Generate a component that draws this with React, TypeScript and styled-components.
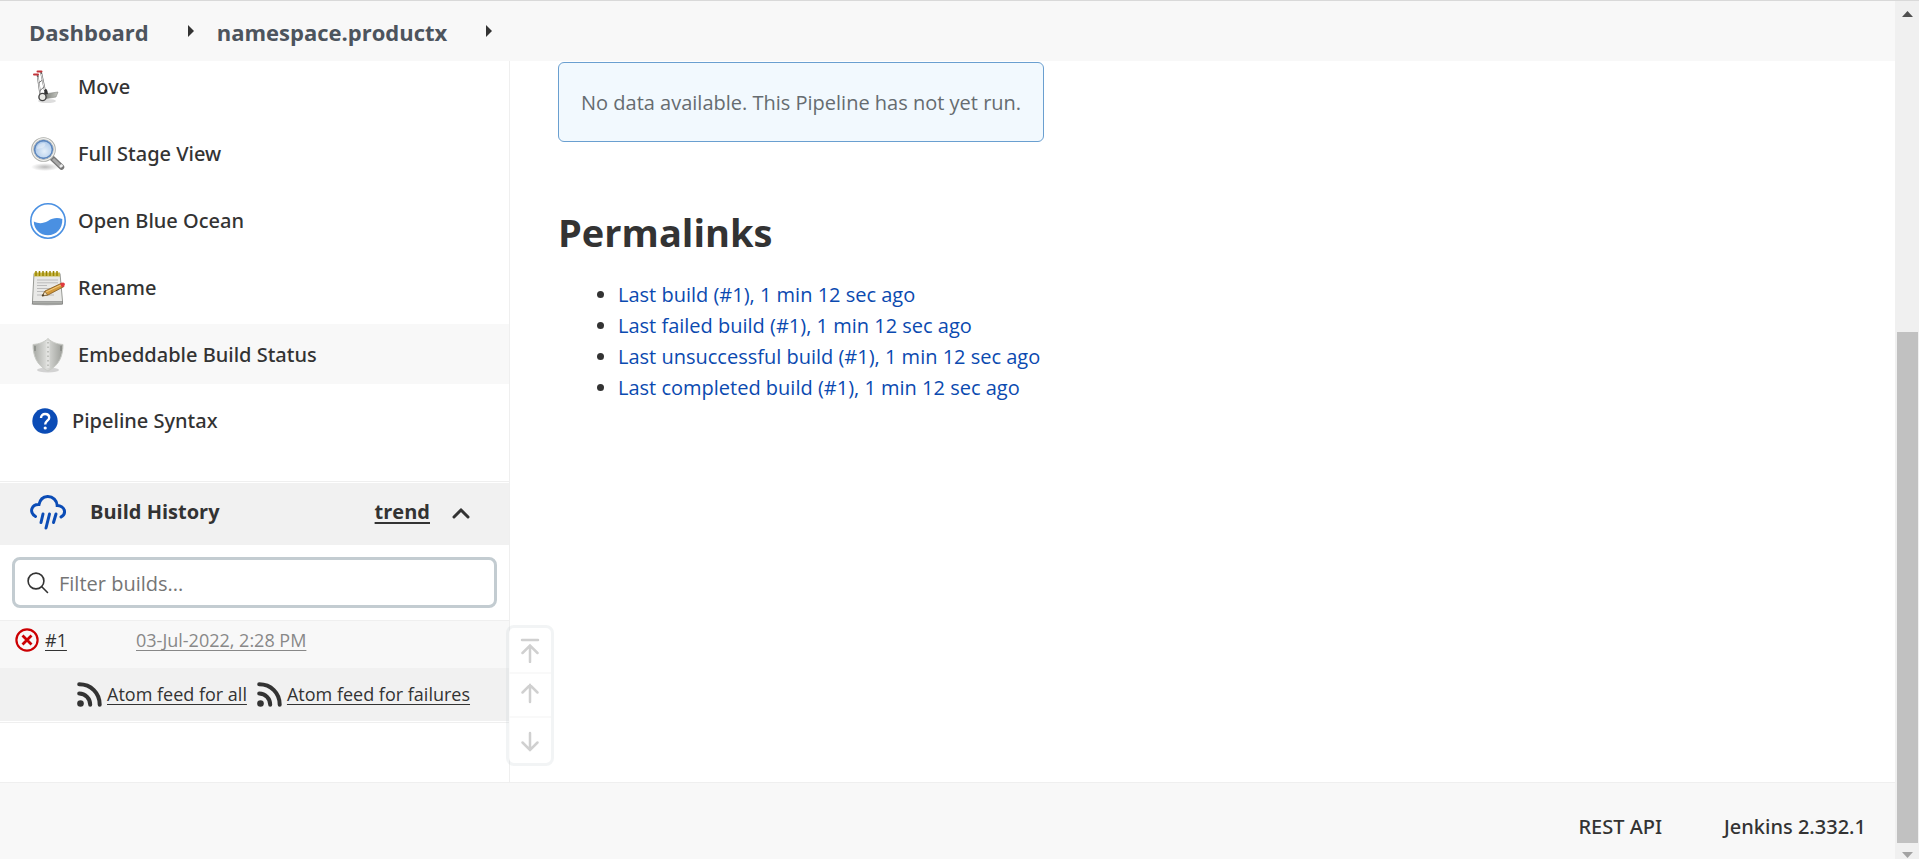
import React from 'react';
import styled, { createGlobalStyle } from 'styled-components';

const GlobalStyle = createGlobalStyle`
  *, *::before, *::after { box-sizing: border-box; }
  body {
    margin: 0;
    background: #fff;
    color: #333;
    font: 400 20px/30px "Open Sans", "Noto Sans", sans-serif;
  }
  a { color: inherit; text-decoration: none; }
  svg { display: block; flex: none; }
`;

const Shell = styled.div`
  display: flex;
  min-height: 100vh;
  border-top: 1px solid #d9d9d9;
`;

const Page = styled.div`
  flex: 1;
  min-width: 0;
  display: flex;
  flex-direction: column;
`;

const Breadcrumbs = styled.nav`
  position: relative;
  z-index: 1;
  display: flex;
  align-items: center;
  height: 60px;
  padding: 2px 29px 0;
  background: #f8f8f8;
  color: #4d545d;
  font-size: 22px;
  font-weight: 700;
`;

const Crumb = styled.a`
  flex: none;
`;

const CrumbArrow = styled.button`
  display: flex;
  margin: 0 23px 2px 39px;
  padding: 0;
  border: 0;
  background: none;
  color: #333;
`;

const Body = styled.div`
  flex: 1;
  display: flex;
`;

const Sidebar = styled.aside`
  position: relative;
  flex: none;
  width: 510px;
  border-right: 1px solid #efefef;
`;

const Tasks = styled.nav`
  display: flex;
  flex-direction: column;
  gap: 7px;
  margin-top: -5px;
`;

const Task = styled.a<{ $active?: boolean; $compact?: boolean }>`
  display: flex;
  align-items: center;
  gap: ${(p) => (p.$compact ? '14px' : '12px')};
  height: ${(p) => (p.$compact ? '58px' : '60px')};
  padding-top: 2px;
  padding-left: ${(p) => (p.$compact ? '32px' : '30px')};
  background: ${(p) => (p.$active ? '#f8f8f8' : 'transparent')};
  font-family: "Noto Sans", "Open Sans", sans-serif;
  font-weight: 500;
`;

const History = styled.section`
  margin-top: 32px;
  border: solid #efefef;
  border-width: 1px 0;
`;

const HistoryHead = styled.header`
  display: flex;
  align-items: center;
  height: 62px;
  margin-top: 1px;
  padding: 0 39px 4px 30px;
  background: #f1f1f1;
  font-weight: 700;
`;

const HistoryTitle = styled.h2`
  flex: 1;
  margin: 0 0 0 24px;
  font-size: 20px;
  line-height: 30px;
`;

const TrendLink = styled.a`
  text-decoration: underline;
  text-decoration-thickness: 2px;
  text-underline-offset: 3px;
`;

const Collapse = styled.button`
  display: flex;
  margin: 2px 0 0 22px;
  padding: 0;
  border: 0;
  background: none;
  color: #333;
`;

const Filter = styled.label`
  display: flex;
  align-items: center;
  gap: 10px;
  height: 51px;
  margin: 12px;
  padding: 0 12px;
  border: 3px solid #c3ccd1;
  border-radius: 8px;
`;

const FilterInput = styled.input`
  flex: 1;
  min-width: 0;
  padding: 2px 0 0;
  border: 0;
  outline: 0;
  background: none;
  color: #333;
  font: inherit;
  &::placeholder { color: #757575; opacity: 1; }
`;

const Builds = styled.table`
  width: 100%;
  border-collapse: collapse;
  font-size: 18px;
  line-height: 24px;
`;

const BuildRow = styled.tr`
  height: 47px;
  background: #f8f8f8;
  border-top: 1px solid #efefef;
`;

const BuildCell = styled.td<{ $muted?: boolean }>`
  padding: ${(p) => (p.$muted ? '0 0 8px' : '0 0 8px 15px')};
  width: ${(p) => (p.$muted ? 'auto' : '136px')};
  vertical-align: middle;
  color: ${(p) => (p.$muted ? '#888' : '#333')};
`;

const BuildId = styled.div`
  display: flex;
  align-items: center;
  gap: 6px;
`;

const Underlined = styled.a`
  text-decoration: underline;
  text-underline-offset: 3px;
`;

const Feeds = styled.footer`
  display: flex;
  align-items: center;
  gap: 10px;
  height: 53px;
  margin-bottom: 1px;
  padding-left: 77px;
  background: #f1f1f1;
  font-size: 18px;
  line-height: 24px;
`;

const Feed = styled.span`
  display: flex;
  align-items: center;
  gap: 5px;
`;

const PageNav = styled.div`
  position: absolute;
  right: -45px;
  bottom: 16px;
  display: flex;
  flex-direction: column;
  width: 48px;
  border: 3px solid rgba(195, 204, 209, 0.22);
  border-radius: 8px;
  background: rgba(255, 255, 255, 0.75);
  background-clip: padding-box;
`;

const PageNavButton = styled.button`
  display: flex;
  align-items: center;
  justify-content: center;
  height: 44px;
  padding: 0;
  border: 0;
  background: none;
  color: #d0d0d0;
  & + & { border-top: 2px solid #f9f9f9; }
  &:last-child { height: 47px; }
`;

const Main = styled.main`
  flex: 1;
  min-width: 0;
  padding: 1px 48px 0;
`;

const Notice = styled.p`
  display: flex;
  align-items: center;
  width: fit-content;
  height: 80px;
  margin: 0;
  padding: 2px 22px 0;
  border: 1px solid #6a9fd0;
  border-radius: 6px;
  background: #f2f9fe;
  color: #666c70;
`;

const Heading = styled.h1`
  margin: 63px 0 20px;
  font-size: 38px;
  line-height: 54px;
`;

const Permalinks = styled.ul`
  margin: 0;
  padding-left: 60px;
  line-height: 31px;
`;

const Permalink = styled.a`
  color: #0b4ab0;
`;

const Footer = styled.footer`
  display: flex;
  justify-content: flex-end;
  align-items: center;
  gap: 62px;
  height: 77px;
  padding: 12px 29px 0;
  border-top: 1px solid #efefef;
  background: #f8f8f8;
  font-family: "Noto Sans", "Open Sans", sans-serif;
  font-weight: 500;
`;

const ScrollBar = styled.div`
  display: flex;
  flex-direction: column;
  align-items: center;
  justify-content: space-between;
  width: 24px;
  padding: 10px 0 1px;
  background: #f0f0f0;
`;

const ScrollThumb = styled.div`
  width: 21px;
  height: calc(60vh - 4px);
  margin-top: auto;
  margin-bottom: 9px;
  background: #c1c1c1;
`;

const CaretRight = () => (
  <svg width="6" height="12" viewBox="0 0 6 12"><path d="M0 0L6 6L0 12Z" fill="currentColor" /></svg>
);

const MoveIcon = () => (
  <svg width="36" height="36" viewBox="0 0 36 36" fill="none">
    <defs>
      <linearGradient id="plate" x1="0" x2="1"><stop offset="0" stopColor="#777a74" /><stop offset="1" stopColor="#c4c6c0" /></linearGradient>
    </defs>
    <ellipse cx="17" cy="32" rx="9" ry="2" fill="#ddd" />
    <path d="M7.500 5.500L10.500 27M11 3L15 22" stroke="#666" strokeWidth="1.800" />
    <path d="M7.900 8L10.500 26M11.300 5L14.700 21" stroke="#f4f4f4" strokeWidth=".9" />
    <path d="M8.500 14L12.500 11M9.500 22L14 18" stroke="#777" strokeWidth="1" />
    <path d="M4 5.500H8M7.500 2.500H11.500" stroke="#c4343a" strokeWidth="2" strokeLinecap="round" />
    <path d="M14 25L28 23L26 28L14 30Z" fill="url(#plate)" stroke="#888a85" strokeWidth=".6" />
    <path d="M14.500 21Q17 18 18 25L14 26Z" fill="#333" />
    <circle cx="12.500" cy="28" r="3.600" fill="#e8e8e4" stroke="#444" strokeWidth="1.400" />
  </svg>
);

const MagnifierIcon = () => (
  <svg width="36" height="36" viewBox="0 0 36 36" fill="none">
    <defs>
      <radialGradient id="lens" cx=".55" cy=".6" r=".6"><stop offset="0" stopColor="#e6f0fa" /><stop offset="1" stopColor="#a9c6e8" /></radialGradient>
      <radialGradient id="lensShade"><stop offset="0" stopColor="#bbb" /><stop offset="1" stopColor="#bbb" stopOpacity="0" /></radialGradient>
    </defs>
    <ellipse cx="15" cy="31" rx="14" ry="4" fill="url(#lensShade)" />
    <path d="M22 22L31.500 31" stroke="#777" strokeWidth="5.500" strokeLinecap="round" />
    <path d="M23 23L31 30.500" stroke="#aaa" strokeWidth="3" />
    <path d="M30 31L32.500 29" stroke="#eee" strokeWidth="2.500" />
    <circle cx="13.500" cy="13.500" r="11" stroke="#aaaca8" strokeWidth="2.600" />
    <circle cx="13.500" cy="13.500" r="10.800" stroke="#f0f0ee" strokeWidth="1.200" />
    <circle cx="13.500" cy="13.500" r="8.900" fill="url(#lens)" stroke="#5c86bd" strokeWidth="1.600" />
    <path d="M7 13C7 9 10 7 14 7C17 7 15 11 12 12Z" fill="#fff" opacity=".35" />
  </svg>
);

const OceanIcon = () => (
  <svg width="36" height="36" viewBox="0 0 36 36">
    <circle cx="18" cy="18" r="17.200" fill="#fff" stroke="#4a90e2" strokeWidth="1.600" />
    <path d="M3.800 18.500C9 21 13 20.500 18 18C23 14.500 28 14.500 32.300 16C32.800 26 26 32.200 18 32.200C10 32.200 4 26.500 3.800 18.500Z" fill="#4a90e2" />
  </svg>
);

const NotepadIcon = () => (
  <svg width="36" height="36" viewBox="0 0 36 36" fill="none">
    <ellipse cx="17" cy="34" rx="16" ry="1.500" fill="#ccc" />
    <path d="M4 3.500H30L32.500 31V34H2.500V31Z" fill="#e9e9e7" stroke="#999b96" />
    <path d="M2.500 31.500H32.500V34H2.500Z" fill="#aaaca8" stroke="#777" strokeWidth=".5" />
    <path d="M4 2.500H30V6.500H4Z" fill="#cabb4e" />
    <path d="M6 1V6M9.500 1V6M13 1V6M16.500 1V6M20 1V6M23.500 1V6M27 1V6" stroke="#9a8500" strokeWidth="1.500" />
    <path d="M7 10H28M7 12.800H28M7 15.500H17M7 18.500H20M7 21.500H15M7 25H24" stroke="#bbb" strokeWidth="1" />
    <path d="M12 26L15 21L32 13L34 16.500L18 25Z" fill="#d39a3c" stroke="#80551a" strokeWidth=".8" />
    <path d="M16 22L31 15" stroke="#f4cd80" />
    <path d="M12 26L15 21.500L17.500 25Z" fill="#f2dfbd" stroke="#5a4520" strokeWidth=".5" />
    <path d="M12 26L13.300 24L14.300 25.500Z" fill="#222" />
    <path d="M30 13.800Q34 11 35 14Q35 16 32 17.500Z" fill="#e03a3e" />
  </svg>
);

const ShieldIcon = () => (
  <svg width="36" height="36" viewBox="0 0 36 36" fill="none">
    <defs>
      <linearGradient id="steel" x1="0" x2="1"><stop offset="0" stopColor="#a5a7a2" /><stop offset=".45" stopColor="#dcddda" /><stop offset="1" stopColor="#9b9d98" /></linearGradient>
    </defs>
    <ellipse cx="18" cy="33" rx="11" ry="2.500" fill="#d2d2d2" />
    <path d="M18 1.500C14 5.500 9 7 3 7.500C3 18 6 28 18 34C30 28 33 18 33 7.500C27 7 22 5.500 18 1.500Z" fill="url(#steel)" stroke="#c9cbc6" />
    <path d="M18 4V31" stroke="#e4e4e2" strokeWidth="3" />
    <path d="M18 5V31" stroke="#b3b5b0" strokeWidth="1.500" strokeDasharray="1.500 3" />
    <path d="M5 9V14M31 9V14" stroke="#888a85" strokeWidth="1.500" />
  </svg>
);

const HelpIcon = () => (
  <svg width="26" height="26" viewBox="0 0 26 26" fill="none">
    <circle cx="13" cy="13" r="12.700" fill="#0b4cb6" />
    <path d="M9 10C9 7.500 10.800 6 13.100 6C15.500 6 17.200 7.500 17.200 9.700C17.200 12.700 13.200 12.800 13.200 16.500" stroke="#fff" strokeWidth="2.400" />
    <circle cx="13.200" cy="20" r="1.600" fill="#fff" />
  </svg>
);

const RainIcon = () => (
  <svg width="36" height="36" viewBox="0 0 36 36" fill="none" stroke="#0b4cb6" strokeWidth="3" strokeLinecap="round">
    <path d="M5.500 22.500C2 20.500 1 17 2 14.500C3.200 11.500 6 10.300 9 10.500C10 5.500 13 2.800 17.500 2.500C23 2.300 27 6.500 27.200 11.500C30.500 11.700 34 13.500 34.500 17C34.800 20 33.500 22 31 23" />
    <path d="M13 20L11 28.500M19.500 20L16 34M26 20L23.500 28.500" />
  </svg>
);

const ChevronUp = () => (
  <svg width="18" height="12" viewBox="0 0 18 12" fill="none"><path d="M2 10L9 3L16 10" stroke="currentColor" strokeWidth="3" strokeLinecap="round" /></svg>
);

const SearchIcon = () => (
  <svg width="22" height="22" viewBox="0 0 22 22" fill="none" stroke="#333" strokeWidth="1.600">
    <circle cx="9" cy="9" r="7.900" /><path d="M14.800 14.800L20.500 20.500" strokeLinecap="round" />
  </svg>
);

const FailedIcon = () => (
  <svg width="24" height="24" viewBox="0 0 24 24" fill="none" stroke="#cc0003">
    <circle cx="12" cy="12" r="10.600" strokeWidth="2.200" />
    <path d="M7.500 7.500L16.500 16.500M16.500 7.500L7.500 16.500" strokeWidth="2.800" />
  </svg>
);

const FeedIcon = () => (
  <svg width="25" height="25" viewBox="0 0 25 25" fill="none" stroke="#333" strokeWidth="4" strokeLinecap="round">
    <path d="M2.200 2.300C14 2.300 22.700 11 22.700 22.700M2.200 11.500C8.500 11.500 13.200 16.500 13.200 22.700" />
    <circle cx="3.500" cy="21.500" r="3.300" fill="#333" stroke="none" />
  </svg>
);

const ArrowIcon = ({ kind }: { kind: 'top' | 'up' | 'down' }) => (
  <svg width="20" height="26" viewBox="0 0 20 26" fill="none" stroke="currentColor" strokeWidth="2.500" strokeLinecap="round">
    {kind === 'top' && <path d="M2 3H18M10 25V9M2.500 16L10 8.500L17.500 16" />}
    {kind === 'up' && <path d="M10 20V3M2.500 10.500L10 3L17.500 10.500" />}
    {kind === 'down' && <path d="M10 5V22M2.500 14.500L10 22L17.500 14.500" />}
  </svg>
);

const tasks = [
  { label: 'Move', icon: <MoveIcon /> },
  { label: 'Full Stage View', icon: <MagnifierIcon /> },
  { label: 'Open Blue Ocean', icon: <OceanIcon /> },
  { label: 'Rename', icon: <NotepadIcon /> },
  { label: 'Embeddable Build Status', icon: <ShieldIcon />, active: true },
  { label: 'Pipeline Syntax', icon: <HelpIcon />, compact: true },
];

const permalinks = ['Last build', 'Last failed build', 'Last unsuccessful build', 'Last completed build'];

export default function App() {
  return (
    <Shell>
      <GlobalStyle />
      <Page>
        <Breadcrumbs aria-label="Breadcrumbs">
          <Crumb href="#">Dashboard</Crumb>
          <CrumbArrow aria-label="Dashboard menu"><CaretRight /></CrumbArrow>
          <Crumb href="#">namespace.productx</Crumb>
          <CrumbArrow aria-label="Project menu"><CaretRight /></CrumbArrow>
        </Breadcrumbs>
        <Body>
          <Sidebar>
            <Tasks aria-label="Tasks">
              {tasks.map((t) => (
                <Task key={t.label} href="#" $active={t.active} $compact={t.compact}>
                  {t.icon}
                  {t.label}
                </Task>
              ))}
            </Tasks>
            <History>
              <HistoryHead>
                <RainIcon />
                <HistoryTitle>Build History</HistoryTitle>
                <TrendLink href="#">trend</TrendLink>
                <Collapse aria-label="Collapse"><ChevronUp /></Collapse>
              </HistoryHead>
              <Filter>
                <SearchIcon />
                <FilterInput type="text" placeholder="Filter builds..." aria-label="Filter builds" />
              </Filter>
              <Builds>
                <tbody>
                  <BuildRow>
                    <BuildCell>
                      <BuildId><FailedIcon /><Underlined href="#">#1</Underlined></BuildId>
                    </BuildCell>
                    <BuildCell $muted><Underlined href="#">03-Jul-2022, 2:28 PM</Underlined></BuildCell>
                  </BuildRow>
                </tbody>
              </Builds>
              <Feeds>
                <Feed><FeedIcon /><Underlined href="#">Atom feed for all</Underlined></Feed>
                <Feed><FeedIcon /><Underlined href="#">Atom feed for failures</Underlined></Feed>
              </Feeds>
            </History>
            <PageNav>
              <PageNavButton aria-label="Go to top"><ArrowIcon kind="top" /></PageNavButton>
              <PageNavButton aria-label="Page up"><ArrowIcon kind="up" /></PageNavButton>
              <PageNavButton aria-label="Page down"><ArrowIcon kind="down" /></PageNavButton>
            </PageNav>
          </Sidebar>
          <Main>
            <Notice>No data available. This Pipeline has not yet run.</Notice>
            <Heading>Permalinks</Heading>
            <Permalinks>
              {permalinks.map((p) => (
                <li key={p}><Permalink href="#">{p} (#1), 1 min 12 sec ago</Permalink></li>
              ))}
            </Permalinks>
          </Main>
        </Body>
        <Footer>
          <a href="#">REST API</a>
          <a href="#">Jenkins 2.332.1</a>
        </Footer>
      </Page>
      <ScrollBar aria-hidden="true">
        <svg width="11" height="6" viewBox="0 0 11 6"><path d="M0 6L5.500 0L11 6Z" fill="#505050" /></svg>
        <ScrollThumb />
        <svg width="11" height="6" viewBox="0 0 11 6"><path d="M0 0L5.500 6L11 0Z" fill="#a3a3a3" /></svg>
      </ScrollBar>
    </Shell>
  );
}
